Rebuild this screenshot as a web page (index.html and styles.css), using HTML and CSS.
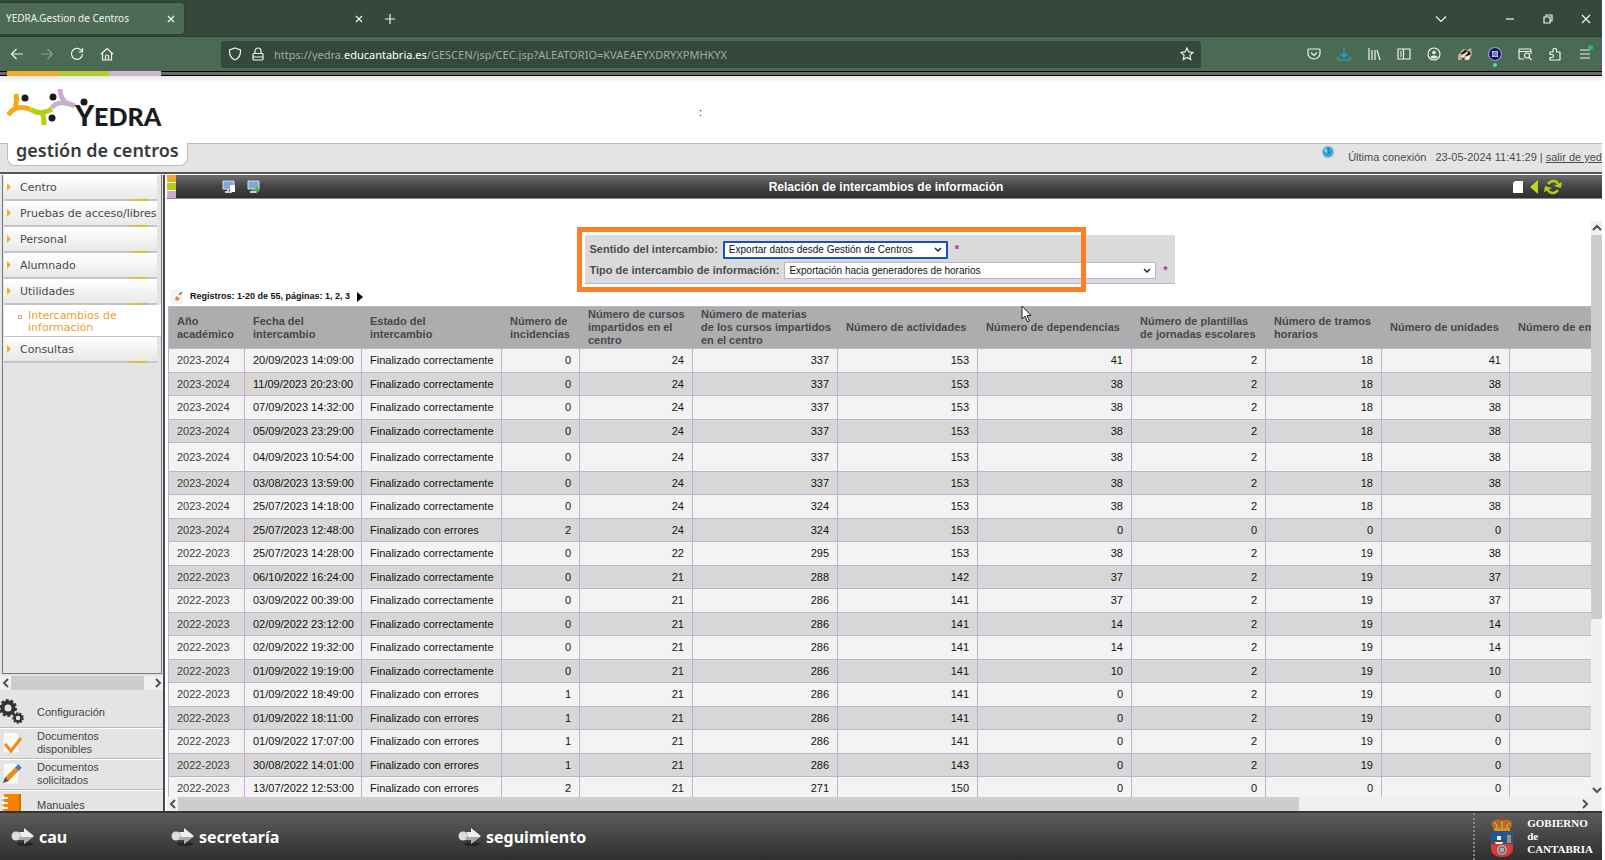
FILE: index.html
```html
<!DOCTYPE html>
<html lang="es">
<head>
  <meta charset="UTF-8">
  <title>YEDRA.Gestion de Centros</title>
  <link rel="stylesheet" href="styles.css">
</head>
<body>

<div class="tabs">
  <div class="tab active">YEDRA.Gestion de Centros
    <button class="chrome-btn" aria-label="Cerrar"><svg width="10" height="10" viewBox="0 0 10 10"><path d="M2 2l6 6M8 2l-6 6"/></svg></button>
  </div>
  <div class="tab">
    <button class="chrome-btn" aria-label="Cerrar"><svg width="10" height="10" viewBox="0 0 10 10"><path d="M2 2l6 6M8 2l-6 6"/></svg></button>
  </div>
  <button class="chrome-btn new-tab" aria-label="Nueva"><svg width="12" height="12" viewBox="0 0 12 12"><path d="M6 1v10M1 6h10"/></svg></button>
  <div class="window-btns">
    <button class="chrome-btn" aria-label="Lista"><svg width="12" height="12" viewBox="0 0 12 12"><path d="M1 3.5l5 5 5-5"/></svg></button>
    <button class="chrome-btn gap" aria-label="Minimizar"><svg width="10" height="10" viewBox="0 0 10 10"><path d="M1 5h8"/></svg></button>
    <button class="chrome-btn" aria-label="Restaurar"><svg width="10" height="10" viewBox="0 0 10 10"><path d="M1 3h6v6h-6zM3 3V1h6v6H7"/></svg></button>
    <button class="chrome-btn" aria-label="Salir"><svg width="10" height="10" viewBox="0 0 10 10"><path d="M1 1l8 8M9 1l-8 8"/></svg></button>
  </div>
</div>

<div class="navbar">
  <div class="nav-left">
    <button class="chrome-btn" aria-label="Atrás"><svg width="14" height="14" viewBox="0 0 14 14"><path d="M13 7H1.500M6.500 2l-5 5 5 5"/></svg></button>
    <button class="chrome-btn dim" aria-label="Adelante"><svg width="14" height="14" viewBox="0 0 14 14"><path d="M1 7h11.500M7.500 2l5 5-5 5"/></svg></button>
    <button class="chrome-btn" aria-label="Recargar"><svg width="14" height="14" viewBox="0 0 14 14"><path d="M12 4.500A5.500 5.500 0 1 0 12.500 7M12.500 1v4h-4"/></svg></button>
    <button class="chrome-btn" aria-label="Inicio"><svg width="14" height="14" viewBox="0 0 14 14"><path d="M1 7l6-5.500L13 7M2.500 6v7h9V6M5.500 13V9.500a1.500 1.500 0 0 1 3 0V13"/></svg></button>
  </div>
  <div class="urlbar">
    <svg width="14" height="14" viewBox="0 0 14 14"><path d="M7 1l5.500 2c.3 4.500-1 8-5.500 10C2.500 11 1.200 7.500 1.500 3z"/></svg>
    <svg width="14" height="14" viewBox="0 0 14 14"><rect x="2" y="6.500" width="10" height="6.500" rx="1"/><path d="M4 6V4a3 3 0 0 1 6 0v2M2 10h10"/></svg>
    <span class="url">https://yedra.<b>educantabria.es</b>/GESCEN/jsp/CEC.jsp?ALEATORIO=KVAEAEYXDRYXPMHKYX</span>
    <svg width="14" height="14" viewBox="0 0 14 14"><path d="M7 1l1.800 3.900 4.200.5-3.100 2.900.8 4.200L7 10.400l-3.700 2.100.8-4.200L1 5.400l4.200-.5z"/></svg>
  </div>
  <div class="nav-right">
    <svg width="14" height="14" viewBox="0 0 14 14"><path d="M1 3a1 1 0 0 1 1-1h10a1 1 0 0 1 1 1v3.500a6 5.500 0 0 1-12 0zM4 5.500l3 3 3-3"/></svg>
    <svg class="cyan" width="14" height="14" viewBox="0 0 14 14"><path d="M7 1v9M3.500 6.500L7 10l3.500-3.500M1 10v3h12v-3"/></svg>
    <svg width="14" height="14" viewBox="0 0 14 14"><path d="M2 1v12M5 3v10M8 3v10M10 3l3 10"/></svg>
    <svg width="14" height="14" viewBox="0 0 14 14"><path d="M1 2h12v10H1zM6.500 2v10M3 5h2M3 7h2M3 9h2"/></svg>
    <svg width="14" height="14" viewBox="0 0 14 14"><circle cx="7" cy="7" r="6"/><circle class="solid" cx="7" cy="5.500" r="1.800"/><path class="solid" d="M3.500 10c1-2 6-2 7 0-1.500 2-5.500 2-7 0z"/></svg>
    <svg class="badger" width="14" height="14" viewBox="0 0 14 14"><path fill="#c9ab95" d="M0 8l5-6 4 1 4-2 1 6-3 6H4L0 13z"/><path fill="#1d1713" d="M2 7l5-4 3 1-5 3zM6 8l5-4 2 3-4 2zM3 12l3-1 1 1-2 1z"/><path fill="#fff" d="M3 10l6-5 1 1-5 4zM7 11l5-3-1 4-3 1z"/></svg>
    <span class="ext"><svg class="badger" width="14" height="14" viewBox="0 0 14 14"><circle cx="7" cy="7" r="6.500" fill="#14165e" stroke="#8f96d8"/><path d="M4 4h6v6H4z" fill="#e8eaff"/><path d="M4 6h6M4 8h6M6 4v6M8 4v6" stroke="#14165e" stroke-width="0.600"/></svg><i></i></span>
    <svg width="14" height="14" viewBox="0 0 14 14"><path d="M6 12H2a1 1 0 0 1-1-1V3a1 1 0 0 1 1-1h10a1 1 0 0 1 1 1v4M1 4.500h12"/><circle cx="9" cy="8.500" r="2.500"/><path d="M11 10.500l2.500 2.500"/></svg>
    <svg width="14" height="14" viewBox="0 0 14 14"><path d="M2 5h3V3a1.700 1.700 0 0 1 3.500 0v2H12v8H2v-2.500h2a1.500 1.500 0 0 0 0-3H2z"/></svg>
    <span class="menu-ico"><svg width="14" height="14" viewBox="0 0 14 14"><path d="M2 3h10M2 7h10M2 11h10"/></svg><i></i></span>
  </div>
</div>

<div class="topline"><span class="stripes"></span></div>

<header class="header">
  <div class="brand">
    <svg class="people" width="82" height="40" viewBox="0 0 82 40">
      <g fill="none" stroke-width="5">
        <path stroke="#f5a81c" d="M9 5c1 6 1 9-1 13M1 26c6-8 12-9 22-6"/>
        <path stroke="#b9cf12" d="M23 20c7 5 14 5 22 0M35 24c2 3 2 7 2 12"/>
        <path stroke="#c7aed0" d="M45 19c4-7 14-6 23-2M53 0c0 8 3 12 8 15"/>
      </g>
      <g fill="#1b1b1f"><circle cx="18" cy="9" r="3.500"/><circle cx="46" cy="8" r="3.500"/><circle cx="45" cy="29" r="3.500"/><circle cx="77" cy="13" r="3.500"/></g>
    </svg>
    <span class="word"><span class="big-y">Y</span>EDRA</span>
  </div>
  <span class="colon">:</span>
</header>

<div class="subheader">
  <div class="subtitle">gestión de centros</div>
  <div class="session">
    <svg width="14" height="14" viewBox="0 0 14 14"><circle cx="7" cy="7" r="6.500" fill="#b9c4c9"/><circle cx="7" cy="7" r="5" fill="#22a7dc"/><circle cx="5.500" cy="5.500" r="2" fill="#7fdcf8"/><path d="M7 3v4l2 1" stroke="#0a5f8c" fill="none"/></svg>
    <span>Última conexión</span>
    <span>23-05-2024 11:41:29 | <a href="#">salir de yed</a></span>
  </div>
</div>

<div class="workspace">
  <aside class="sidebar">
    <nav class="menu">
      <a href="#" class="item">Centro</a>
      <a href="#" class="item">Pruebas de acceso/libres</a>
      <a href="#" class="item">Personal</a>
      <a href="#" class="item">Alumnado</a>
      <a href="#" class="item">Utilidades</a>
      <a href="#" class="subitem">Intercambios de información</a>
      <a href="#" class="item">Consultas</a>
    </nav>
    <div class="hbar side-bar">
      <button class="arrow" aria-label="Izquierda"><svg width="8" height="10" viewBox="0 0 8 10"><path d="M6 1L2 5l4 4"/></svg></button>
      <span class="track"><span class="thumb"></span></span>
      <button class="arrow" aria-label="Derecha"><svg width="8" height="10" viewBox="0 0 8 10"><path d="M2 1l4 4-4 4"/></svg></button>
    </div>
    <div class="tools">
      <a href="#" class="tool">
        <svg width="24" height="26" viewBox="0 0 24 26"><g fill="none" stroke="#333"><circle cx="8" cy="9" r="5.500" stroke-width="4"/><circle cx="8" cy="9" r="8" stroke-width="2" stroke-dasharray="3 2"/><circle cx="18" cy="19" r="3.500" stroke-width="2.500"/><circle cx="18" cy="19" r="5" stroke-width="1.500" stroke-dasharray="2 1.500"/></g></svg>
        <span>Configuración</span></a>
      <a href="#" class="tool">
        <svg width="24" height="26" viewBox="0 0 24 26"><path d="M3 2h12l4 4v17H3z" fill="#fafafa" stroke="#ddd"/><path d="M5 14l6 7L21 8" fill="none" stroke="#f08a1c" stroke-width="3"/></svg>
        <span>Documentos disponibles</span></a>
      <a href="#" class="tool">
        <svg width="24" height="26" viewBox="0 0 24 26"><path d="M3 2h12l4 4v17H3z" fill="#fafafa" stroke="#ddd"/><path d="M7 18L18 7" stroke="#f08a1c" stroke-width="5"/><path d="M17 8l3-3" stroke="#4a78c8" stroke-width="5"/><path d="M3 22l2-6 4 4z" fill="#555"/></svg>
        <span>Documentos solicitados</span></a>
      <a href="#" class="tool last">
        <svg width="24" height="26" viewBox="0 0 24 26"><path d="M4 1h17v25H4z" fill="#f98000"/><path d="M20 1v25" stroke="#b35c00"/><path d="M2 5h6M2 10h6M2 15h6M2 20h6" stroke="#fff" stroke-width="2"/><path d="M2 7h4M2 12h4M2 17h4" stroke="#f98000"/></svg>
        <span>Manuales</span></a>
    </div>
  </aside>

  <main class="main">
    <div class="titlebar">
      <span class="squares"><i></i><i></i><i></i></span>
      <div class="title-icons">
        <svg width="14" height="14" viewBox="0 0 14 14"><path d="M1 1h11v8H1z" fill="#7fa6de" stroke="#d6dde6"/><path d="M3 12h7M6 9v3" stroke="#ccc" stroke-width="2"/><path d="M8 5h5v7H8z" fill="#fff"/></svg>
        <svg width="14" height="14" viewBox="0 0 14 14"><path d="M1 1h11v8H1z" fill="#7fa6de" stroke="#d6dde6"/><path d="M3 12h7M6 9v3" stroke="#ccc" stroke-width="2"/><path d="M5 9h4V6l4 4-4 4v-3H5z" fill="#4fb33c"/></svg>
      </div>
      <h1>Relación de intercambios de información</h1>
      <div class="title-actions">
        <svg width="12" height="14" viewBox="0 0 12 14"><path d="M1 3l2-2h8v12H1z" fill="#fff"/></svg>
        <svg width="8" height="14" viewBox="0 0 8 14"><path d="M8 0v14L0 7z" fill="#c3d616"/></svg>
        <svg width="18" height="16" viewBox="0 0 18 16"><g fill="none" stroke="#b9cf12" stroke-width="2.500"><path d="M4 5c3-4 8-4 10 0"/><path d="M14 11c-3 4-8 4-10 0"/></g><path d="M18 3l-1 6-7-2zM0 13l1-6 7 2z" fill="#b9cf12"/></svg>
      </div>
    </div>

    <div class="frame">
      <div class="content">
        <div class="form-wrap">
        <form class="filters">
          <div class="field">
            <label for="sentido">Sentido del intercambio:</label>
            <select id="sentido" class="focused">
              <option>Exportar datos desde Gestión de Centros</option>
            </select>
            <span class="req">*</span>
          </div>
          <div class="field">
            <label for="tipo">Tipo de intercambio de información:</label>
            <select id="tipo">
              <option>Exportación hacia generadores de horarios</option>
            </select>
            <span class="req">*</span>
          </div>
          <div class="highlight"></div>
        </form>
        </div>

        <div class="pager">
          <svg width="12" height="14" viewBox="0 0 12 14"><path d="M1 1h7l3 3v9H1z" fill="#f6f6f6" stroke="#e4e4e4"/><path d="M4 10l1-4 4 2-2 3z" fill="#ee8a3a"/><path d="M8 5l3-3" stroke="#777" stroke-width="1.500"/></svg>
          <span>Registros: 1-20 de 55, páginas: 1, <a href="#">2</a>, <a href="#">3</a></span>
          <svg width="6" height="10" viewBox="0 0 6 10"><path d="M0 0l6 5-6 5z" fill="#000"/></svg>
        </div>

        <table>
          <colgroup>
            <col class="c1"><col class="c2"><col class="c3"><col class="c4"><col class="c5"><col class="c6">
            <col class="c7"><col class="c8"><col class="c9"><col class="c10"><col class="c11"><col class="c12">
          </colgroup>
          <thead>
            <tr>
              <th>Año<br>académico</th>
              <th>Fecha del<br>intercambio</th>
              <th>Estado del<br>intercambio</th>
              <th>Número de<br>incidencias</th>
              <th>Número de cursos<br>impartidos en el<br>centro</th>
              <th>Número de materias<br>de los cursos impartidos<br>en el centro</th>
              <th>Número de actividades</th>
              <th>Número de dependencias</th>
              <th>Número de plantillas<br>de jornadas escolares</th>
              <th>Número de tramos<br>horarios</th>
              <th>Número de unidades</th>
              <th>Número de empleados</th>
            </tr>
          </thead>
          <tbody id="rows"></tbody>
        </table>
      </div>
      <div class="vbar">
        <button class="arrow" aria-label="Arriba"><svg width="10" height="8" viewBox="0 0 10 8"><path d="M1 6l4-4 4 4"/></svg></button>
        <span class="track"><span class="thumb"></span></span>
        <button class="arrow" aria-label="Abajo"><svg width="10" height="8" viewBox="0 0 10 8"><path d="M1 2l4 4 4-4"/></svg></button>
      </div>
    </div>
    <div class="hbar main-bar">
      <button class="arrow" aria-label="Izquierda"><svg width="8" height="10" viewBox="0 0 8 10"><path d="M6 1L2 5l4 4"/></svg></button>
      <span class="track"><span class="thumb"></span></span>
      <button class="arrow" aria-label="Derecha"><svg width="8" height="10" viewBox="0 0 8 10"><path d="M2 1l4 4-4 4"/></svg></button>
    </div>
  </main>
</div>

<footer class="footer">
  <a href="#" class="cau"><svg width="24" height="20" viewBox="0 0 24 20"><ellipse cx="14" cy="17" rx="8" ry="2" fill="#222"/><circle cx="5" cy="9" r="4.500" fill="#ddd"/><path d="M8 5h5V1l10 8-10 8v-4H8c2-2 2-6 0-8z" fill="#eee"/><path d="M8 10h14l-9 7v-4H8z" fill="#aaa"/></svg>cau</a>
  <a href="#" class="secretaria"><svg width="24" height="20" viewBox="0 0 24 20"><ellipse cx="14" cy="17" rx="8" ry="2" fill="#222"/><circle cx="5" cy="9" r="4.500" fill="#ddd"/><path d="M8 5h5V1l10 8-10 8v-4H8c2-2 2-6 0-8z" fill="#eee"/><path d="M8 10h14l-9 7v-4H8z" fill="#aaa"/></svg>secretaría</a>
  <a href="#" class="seguimiento"><svg width="24" height="20" viewBox="0 0 24 20"><ellipse cx="14" cy="17" rx="8" ry="2" fill="#222"/><circle cx="5" cy="9" r="4.500" fill="#ddd"/><path d="M8 5h5V1l10 8-10 8v-4H8c2-2 2-6 0-8z" fill="#eee"/><path d="M8 10h14l-9 7v-4H8z" fill="#aaa"/></svg>seguimiento</a>
  <div class="gov">
    <svg width="24" height="42" viewBox="0 0 24 42">
      <path d="M12 0v5M10 2h4" stroke="#c0392b"/>
      <path d="M2 6c3-3 7-3 10-1 3-2 7-2 10 1 1 2-1 5-2 8H4C3 11 1 8 2 6z" fill="#b5692a"/>
      <path d="M4 7c2 0 3 2 3 5M20 7c-2 0-3 2-3 5M12 5v7" stroke="#f0c040" fill="none"/>
      <path d="M4 12h16v3H4z" fill="#c8962c"/>
      <path d="M1 16h22v13H1z" fill="#1d56a5"/>
      <path d="M1 28h22v4c0 6-5 9-11 9S1 38 1 32z" fill="#dc3a34"/>
      <path d="M4 25h10l-2 3H6zM7 20h4v4H7z" fill="#e8e8e8"/>
      <path d="M17 19h4v8h-4z" fill="#a8905c"/>
      <path d="M3 24h12v2H3z" fill="#54442c"/>
      <circle cx="12" cy="34" r="5" fill="#aaa"/><circle cx="12" cy="34" r="3" fill="none" stroke="#555"/>
    </svg>
    <span>GOBIERNO<br>de<br>CANTABRIA</span>
  </div>
</footer>

<svg class="cursor" width="11" height="18" viewBox="0 0 11 18"><path d="M1 1v13l3-3 2.500 6 2-1L6 10.500h4z" fill="#fff" stroke="#222"/></svg>

<script>
const ok = 'Finalizado correctamente';
const ko = 'Finalizado con errores';
const data = [
  ['2023-2024', '20/09/2023 14:09:00', ok, 0, 24, 337, 153, 41, 2, 18, 41],
  ['2023-2024', '11/09/2023 20:23:00', ok, 0, 24, 337, 153, 38, 2, 18, 38],
  ['2023-2024', '07/09/2023 14:32:00', ok, 0, 24, 337, 153, 38, 2, 18, 38],
  ['2023-2024', '05/09/2023 23:29:00', ok, 0, 24, 337, 153, 38, 2, 18, 38],
  ['2023-2024', '04/09/2023 10:54:00', ok, 0, 24, 337, 153, 38, 2, 18, 38],
  ['2023-2024', '03/08/2023 13:59:00', ok, 0, 24, 337, 153, 38, 2, 18, 38],
  ['2023-2024', '25/07/2023 14:18:00', ok, 0, 24, 324, 153, 38, 2, 18, 38],
  ['2023-2024', '25/07/2023 12:48:00', ko, 2, 24, 324, 153, 0, 0, 0, 0],
  ['2022-2023', '25/07/2023 14:28:00', ok, 0, 22, 295, 153, 38, 2, 19, 38],
  ['2022-2023', '06/10/2022 16:24:00', ok, 0, 21, 288, 142, 37, 2, 19, 37],
  ['2022-2023', '03/09/2022 00:39:00', ok, 0, 21, 286, 141, 37, 2, 19, 37],
  ['2022-2023', '02/09/2022 23:12:00', ok, 0, 21, 286, 141, 14, 2, 19, 14],
  ['2022-2023', '02/09/2022 19:32:00', ok, 0, 21, 286, 141, 14, 2, 19, 14],
  ['2022-2023', '01/09/2022 19:19:00', ok, 0, 21, 286, 141, 10, 2, 19, 10],
  ['2022-2023', '01/09/2022 18:49:00', ko, 1, 21, 286, 141, 0, 2, 19, 0],
  ['2022-2023', '01/09/2022 18:11:00', ko, 1, 21, 286, 141, 0, 2, 19, 0],
  ['2022-2023', '01/09/2022 17:07:00', ko, 1, 21, 286, 141, 0, 2, 19, 0],
  ['2022-2023', '30/08/2022 14:01:00', ko, 1, 21, 286, 143, 0, 2, 19, 0],
  ['2022-2023', '13/07/2022 12:53:00', ko, 2, 21, 271, 150, 0, 0, 0, 0]
];

const tbody = document.getElementById('rows');
data.forEach((row, i) => {
  const tr = document.createElement('tr');
  if (i === 4) tr.className = 'tall';
  tr.innerHTML = row.map(v => `<td>${v}</td>`).join('') + '<td></td>';
  tbody.appendChild(tr);
});
</script>
</body>
</html>
```
FILE: styles.css
```css
* { box-sizing: border-box; }
body { margin: 0; padding-right: 3px; height: 100vh; display: flex; flex-direction: column; overflow: hidden; background: #fff; font-family: "Liberation Sans", Arial, sans-serif; font-size: 11px; line-height: 13px; color: #111; }
a { color: inherit; text-decoration: none; }
svg { display: block; flex: none; }
button { padding: 0; margin: 0; border: none; background: none; cursor: pointer; }

/* browser chrome */
.tabs, .navbar { display: flex; align-items: center; flex: none; color: #eef3ef; font-family: "Noto Sans", sans-serif; }
.tabs svg, .navbar svg { fill: none; stroke: #eef3ef; stroke-width: 1.2; }
.tabs { height: 37px; padding-top: 1px; background: #34493c; border-bottom: 1px solid #2a3b31; }
.tab { display: flex; align-items: center; justify-content: space-between; width: 184px; height: 31px; padding: 0 8px 0 6px; font-size: 10px; }
.tab.active { background: #4d6b55; border-radius: 0 3px 3px 0; box-shadow: 0 0 2px #1f2c24; }
.tab:not(.active) { justify-content: flex-end; width: 180px; padding-right: 0; }
.new-tab { margin-left: 20px; }
.window-btns { display: flex; align-items: center; gap: 28px; margin-left: auto; padding-right: 11px; }
.window-btns .gap { margin-left: 30px; }
.navbar { height: 34px; background: #4b6a54; }
.nav-left { display: flex; gap: 16px; width: 221px; padding-left: 10px; }
.dim { opacity: 0.4; }
.urlbar { display: flex; align-items: center; gap: 9px; flex: 0 1 980px; height: 27px; padding: 0 7px; background: #34493c; border-radius: 3px; font-size: 11px; }
.url { flex: 1; color: #9fada3; white-space: nowrap; overflow: hidden; }
.url b { color: #fff; font-weight: normal; }
.nav-right { display: flex; justify-content: space-between; flex: 1; padding: 0 10px 0 106px; }
.navbar .cyan { stroke: #12b5d4; }
.navbar .solid { fill: #eef3ef; stroke: none; }
.navbar .badger { stroke: none; }
.ext, .menu-ico { position: relative; }
.ext i { position: absolute; left: 5px; bottom: -6px; width: 4px; height: 4px; border-radius: 2px; background: #3fe8a0; }
.menu-ico i { position: absolute; right: -1px; top: -2px; width: 5px; height: 5px; border-radius: 3px; background: #18b894; }

/* application header */
.topline { flex: none; height: 5px; padding-left: 7px; background: #6c6c64; border-top: 1px solid #000; border-bottom: 1px solid #000; }
.stripes { position: relative; top: -1px; display: block; width: 154px; height: 5px; background: linear-gradient(90deg, #f3ab2c 0 33%, #b9c92a 33% 66%, #cdb5d6 66%); }
.header { display: flex; align-items: flex-start; flex: none; height: 67px; padding: 13px 7px 0; background: linear-gradient(#e6e6e6, #fff 6px); }
.brand { display: flex; width: 692px; }
.people { margin-right: -14px; }
.word { font-family: Lato, sans-serif; font-weight: 900; font-size: 25px; line-height: 30px; color: #1b1b1f; padding-top: 11px; }
.big-y { font-size: 29px; }
.colon { padding-top: 17px; }
.subheader { display: flex; justify-content: space-between; align-items: flex-start; flex: none; height: 31px; padding-left: 7px; background: #e4e4e4; border-top: 1px solid #bbb; border-bottom: 2px solid #55555a; }
.subtitle { height: 23px; padding: 0 8px; margin-top: -1px; background: #fff; border: 1px solid #bbb; border-top: none; border-radius: 0 0 8px 8px; font-family: "Noto Sans", sans-serif; font-weight: 600; font-size: 18px; line-height: 14px; color: #3a3a3c; }
.session { display: flex; gap: 13px; padding-top: 1px; color: #4c4c4c; white-space: nowrap; }
.session span { padding-top: 6px; }
.session span + span { margin-left: -4px; }
.session a { text-decoration: underline; }

.workspace { display: flex; flex: 1; min-height: 0; padding-top: 1px; }

/* left menu */
.sidebar { display: flex; flex-direction: column; width: 165px; flex: none; background: #e4e4e4; border-right: 2px solid #4a4a4e; overflow: hidden; }
.menu { flex: 1; margin: 0 1px 2px 2px; padding-left: 1px; border: 1px solid #77777c; border-top: none; background: #e4e4e4; font-family: "DejaVu Sans", Verdana, sans-serif; color: #48484a; }
.item { position: relative; display: flex; align-items: center; height: 26px; margin-right: 4px; padding-left: 16px; background: linear-gradient(#fff, #e8e8e8); border-bottom: 2px solid #c4c4c6; white-space: nowrap; }
.item::before { content: ""; position: absolute; left: 3px; top: 8px; border: 4px solid transparent; border-left-color: #f0ae2e; border-right: none; }
.item::after { content: ""; position: absolute; right: 0; bottom: -2px; width: 27px; height: 2px; background: linear-gradient(90deg, #e8b84c 0 32%, #bccc3c 32% 64%, #c9c4cc 64%); }
.subitem { position: relative; display: block; height: 32px; padding: 5px 20px 3px 24px; background: #fff; border-bottom: 1px solid #c4c4c6; line-height: 12px; color: #eaa02c; }
.subitem::before { content: ""; position: absolute; left: 14px; top: 10px; width: 2px; height: 2px; border: 1px solid #e6a08a; }
.tools { flex: none; height: 121px; overflow: hidden; color: #444; }
.tool { display: flex; align-items: center; gap: 13px; height: 31px; padding-right: 50px; border-bottom: 1px solid #bbb; box-shadow: 0 1px #fff; }
.tool:first-child { height: 38px; padding-top: 7px; }
.tool.last { border: none; }

/* drawn scrollbars */
.hbar, .vbar { display: flex; flex: none; background: #f0f0f0; }
.arrow { display: flex; align-items: center; justify-content: center; flex: none; }
.arrow svg { fill: none; stroke: #505050; stroke-width: 2; }
.track { flex: 1; }
.thumb { display: block; background: #cdcdcd; }
.hbar { height: 14px; }
.hbar .arrow { width: 11px; }
.hbar .thumb { height: 100%; }
.side-bar .thumb { width: 94%; }
.main-bar { padding-right: 12px; }
.main-bar .thumb { width: 80%; }
.vbar { flex-direction: column; width: 11px; overflow: hidden; }
.vbar .arrow { height: 14px; }
.vbar .thumb { height: 70%; }

/* main panel */
.main { display: flex; flex-direction: column; flex: 1; min-width: 0; padding-left: 2px; }
.titlebar { display: flex; align-items: center; flex: none; height: 24px; background: linear-gradient(#6e6e6e, #444 50%, #2f2f2f); border-bottom: 1px solid #888; }
.squares { display: flex; flex-direction: column; gap: 1px; align-self: stretch; width: 9px; background: #fff; }
.squares i { flex: 1; background: #efa62a; }
.squares i:nth-child(2) { background: #b9c818; }
.squares i:nth-child(3) { background: #c5aed0; }
.title-icons { display: flex; gap: 11px; width: 200px; padding-left: 46px; }
.titlebar h1 { flex: 1; margin: 0; padding-right: 116px; text-align: center; font-size: 12px; line-height: 14px; color: #fff; }
.title-actions { display: flex; align-items: center; gap: 6px; width: 90px; }
.frame { display: flex; flex: 1; min-height: 0; padding-top: 22px; }
.content { flex: 1; min-width: 0; padding: 14px 0 0 1px; overflow: hidden; }
.form-wrap { display: flex; justify-content: center; }
.filters { position: relative; width: 590px; height: 49px; padding: 4px 5px; background: #dadada; border-bottom: 1px solid #c5aed0; }
.field { display: flex; align-items: center; height: 21px; gap: 5px; font-weight: bold; color: #4c4c4e; white-space: nowrap; }
.field select { appearance: none; height: 17px; padding: 0 4px; background: #fff url("data:image/svg+xml,%3Csvg xmlns='http://www.w3.org/2000/svg' width='8' height='6'%3E%3Cpath d='M1 1l3 3 3-3' fill='none' stroke='%23222' stroke-width='1.500'/%3E%3C/svg%3E") no-repeat right 4px center; border: 1px solid #c5aed0; font-family: inherit; font-size: 10px; color: #111; }
.field select.focused { width: 225px; height: 18px; border: 2px solid #1550c0; border-radius: 1px; }
#tipo { flex: 1; }
.req { padding: 0 2px; color: #a030a8; }
.highlight { position: absolute; left: -8px; top: -8px; width: 509px; height: 65px; border: 5px solid #ff7f27; pointer-events: none; }
.pager { display: flex; align-items: center; gap: 7px; height: 22px; padding: 3px 0 0 3px; font-size: 9px; font-weight: bold; color: #111; }

table { table-layout: fixed; width: 1502px; border-spacing: 0; border-left: 1px solid #c5aed0; }
.c1 { width: 76px; } .c2 { width: 117px; } .c3 { width: 140px; } .c4 { width: 78px; }
.c5 { width: 113px; } .c6 { width: 145px; } .c7 { width: 140px; } .c8 { width: 154px; }
.c9 { width: 134px; } .c10 { width: 116px; } .c11 { width: 128px; } .c12 { width: 160px; }
th, td { padding: 0 8px; border-right: 1px solid #c5aed0; border-bottom: 1px solid #c5aed0; white-space: nowrap; }
th { height: 43px; background: #adadad; border-right-color: #b4a6b8; color: #48484a; text-align: left; border-top: 1px solid #c5aed0; }
td { height: 24px; background: #f3f3f3; text-align: right; }
tr:nth-child(even) td { height: 23px; background: #d7d7d7; }
tr.tall td { height: 29px; }
td:nth-child(-n+3) { text-align: left; }
td:first-child { color: #3c3c3c; }

/* footer */
.footer { display: flex; align-items: center; flex: none; height: 49px; padding-left: 11px; background: linear-gradient(#5c5c5c, #2e2e2e); border-top: 2px solid #333; color: #fff; }
.footer a { display: flex; align-items: center; gap: 4px; font-family: "Noto Sans", sans-serif; font-weight: bold; font-size: 16px; line-height: 20px; }
.cau { width: 160px; }
.secretaria { width: 287px; }
.gov { display: flex; align-items: center; gap: 13px; height: 100%; margin-left: auto; padding: 0 9px 0 15px; border-left: 2px dotted #888; font-family: "Liberation Serif", serif; font-weight: bold; font-size: 11px; }

.cursor { position: absolute; left: 1021px; top: 305px; }
```
